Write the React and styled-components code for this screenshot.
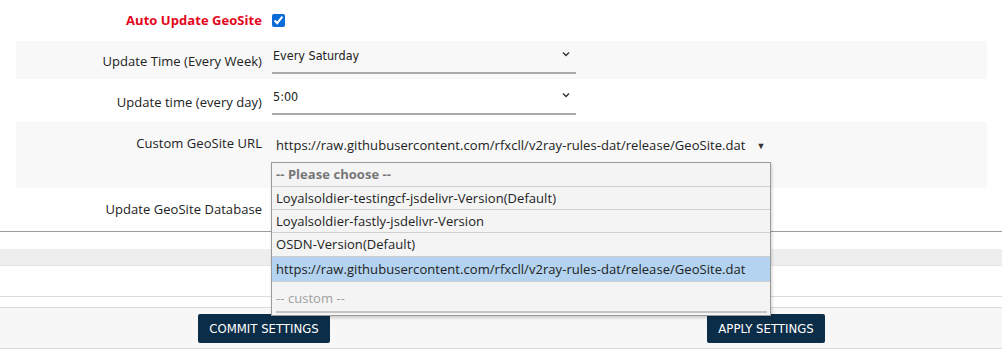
import React from "react";
import styled, { createGlobalStyle } from "styled-components";

const Global = createGlobalStyle`
  html, body { margin: 0; padding: 0; background: #fff; }
  body { font-family: "Open Sans", "Noto Sans", sans-serif; font-size: 13px; color: #222; overflow: hidden; }
`;

const Page = styled.div`
  width: 1002px;
  height: 350px;
  overflow: hidden;
  display: flex;
  flex-direction: column;
`;

const Form = styled.div`
  display: flex;
  flex-direction: column;
  padding: 0 15px 0 16px;
`;

const Row = styled.div`
  display: grid;
  grid-template-columns: 246px 1fr;
  column-gap: 10px;
  align-items: ${(p) => (p.$top ? "start" : "center")};
  height: ${(p) => p.$h}px;
  background: ${(p) => (p.$shade ? "#f8f8f8" : "transparent")};
  box-sizing: border-box;
`;

const Label = styled.div`
  text-align: right;
  font-size: 13px;
  letter-spacing: 0.05px;
  color: ${(p) => (p.$accent ? "#e4061c" : "#222")};
  font-weight: ${(p) => (p.$accent ? 700 : 400)};
  white-space: nowrap;
  transform: translateY(${(p) => p.$dy || 0}px);
  padding-top: ${(p) => p.$pt || 0}px;
`;

const Check = styled.input`
  margin: 0;
  width: 13px;
  height: 13px;
  accent-color: #0b6bd8;
`;

const LineSelect = styled.div`
  width: 304px;
  height: 32px;
  box-sizing: border-box;
  border-bottom: 2px solid #aaa;
  display: flex;
  align-items: flex-start;
  justify-content: space-between;
  padding: 6px 6px 0 1px;
  font-family: "DejaVu Sans Condensed", "DejaVu Sans", sans-serif;
  font-size: 12.5px;
  color: #222;
  transform: translateY(${(p) => p.$dy || 0}px);
`;

const Chevron = styled.svg`
  margin-top: 3px;
`;

const UrlWrap = styled.div`
  position: relative;
  height: 100%;
`;

const UrlSelect = styled.div`
  display: flex;
  align-items: center;
  gap: 11px;
  padding: 14px 0 0 4px;
  font-size: 13px;
  letter-spacing: 0.05px;
  color: #222;
  white-space: nowrap;
`;

const Caret = styled.span`
  font-size: 9px;
  color: #333;
`;

const List = styled.div`
  position: absolute;
  left: -1px;
  top: 40px;
  width: 500px;
  box-sizing: border-box;
  background: #f4f4f4;
  border: 1px solid #9a9a9a;
  box-shadow: 1px 2px 3px rgba(0, 0, 0, 0.18);
  z-index: 5;
  padding-bottom: 2px;
`;

const Option = styled.div`
  box-sizing: border-box;
  height: ${(p) => p.$h || 23}px;
  line-height: ${(p) => (p.$h || 23) - 1}px;
  padding-left: 4px;
  padding-top: ${(p) => p.$pt || 0}px;
  font-size: 13px;
  letter-spacing: 0.05px;
  white-space: nowrap;
  color: ${(p) => (p.$muted ? "#a0a0a0" : p.$head ? "#777" : "#222")};
  font-weight: ${(p) => (p.$head ? 700 : 400)};
  background: ${(p) => (p.$sel ? "#b3d3f0" : "transparent")};
  border-bottom: 1px solid ${(p) => (p.$noline ? "transparent" : "#cfcfcf")};
`;

const ListBar = styled.div`
  margin: 0 3px 0 4px;
  height: 2px;
  background: #c4c4c4;
`;

const Rule = styled.div`
  height: ${(p) => p.$h}px;
  background: ${(p) => p.$bg || "#fff"};
  border-top: ${(p) => (p.$top ? `1px solid ${p.$top}` : "none")};
  box-shadow: ${(p) => (p.$shadow ? "0 1px 2px rgba(0,0,0,0.12)" : "none")};
  flex-shrink: 0;
`;

const Footer = styled.div`
  display: grid;
  grid-template-columns: 502px 502px;
  padding-left: 13px;
  align-items: center;
  height: 40px;
  background: #f7f7f7;
  border-top: 1px solid #dcdcdc;
  border-bottom: 1px solid #dcdcdc;
  flex-shrink: 0;
`;

const Cell = styled.div`
  display: flex;
  justify-content: center;
`;

const Button = styled.button`
  background: #0c2d48;
  color: #fff;
  border: none;
  border-radius: 2px;
  height: 29px;
  padding: 0 11px;
  font-family: "DejaVu Sans Condensed", "DejaVu Sans", sans-serif;
  font-size: 13px;
  cursor: pointer;
`;

const ChevronIcon = () => (
  <Chevron width="8" height="6" viewBox="0 0 8 6">
    <path d="M1 1.5 L4 4.5 L7 1.5" fill="none" stroke="#333" strokeWidth="1.4" />
  </Chevron>
);

const url = "https://raw.githubusercontent.com/rfxcll/v2ray-rules-dat/release/GeoSite.dat";

export default function App() {
  return (
    <Page>
      <Global />
      <Form>
        <Row $h={41}>
          <Label $accent $dy={-1}>Auto Update GeoSite</Label>
          <div style={{ display: "flex" }}>
            <Check type="checkbox" defaultChecked />
          </div>
        </Row>
        <Row $h={38} $shade>
          <Label $dy={1}>Update Time (Every Week)</Label>
          <LineSelect $dy={-2}>
            <span>Every Saturday</span>
            <ChevronIcon />
          </LineSelect>
        </Row>
        <Row $h={43}>
          <Label $dy={1}>Update time (every day)</Label>
          <LineSelect $dy={-2}>
            <span>5:00</span>
            <ChevronIcon />
          </LineSelect>
        </Row>
        <Row $h={66} $shade $top>
          <Label $pt={12}>Custom GeoSite URL</Label>
          <UrlWrap>
            <UrlSelect>
              <span>{url}</span>
              <Caret>▼</Caret>
            </UrlSelect>
            <List>
              <Option $head $h={24}>-- Please choose --</Option>
              <Option>Loyalsoldier-testingcf-jsdelivr-Version(Default)</Option>
              <Option>Loyalsoldier-fastly-jsdelivr-Version</Option>
              <Option $h={24}>OSDN-Version(Default)</Option>
              <Option $sel $h={25}>{url}</Option>
              <Option $muted $noline $h={29} $pt={2}>-- custom --</Option>
              <ListBar />
            </List>
          </UrlWrap>
        </Row>
        <Row $h={43}>
          <Label $dy={-1}>Update GeoSite Database</Label>
          <div />
        </Row>
      </Form>
      <Rule $h={17} $top="#9c9c9c" $shadow />
      <Rule $h={16} $bg="#eeeeee" />
      <Rule $h={30} $top="#e6e6e6" />
      <Rule $h={10} $top="#dcdcdc" />
      <Footer>
        <Cell>
          <Button>COMMIT SETTINGS</Button>
        </Cell>
        <Cell>
          <Button>APPLY SETTINGS</Button>
        </Cell>
      </Footer>
    </Page>
  );
}
